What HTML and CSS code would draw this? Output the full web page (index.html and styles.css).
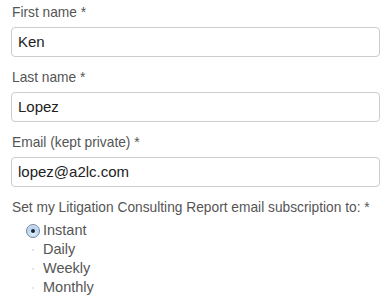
FILE: index.html
```html
<!DOCTYPE html>
<html>
<head>
<meta charset="utf-8">
<link rel="stylesheet" href="styles.css">
</head>
<body>
<form class="form">
  <div class="group">
    <label class="label">First name *</label>
    <div class="input">Ken</div>
  </div>
  <div class="group">
    <label class="label">Last name *</label>
    <div class="input">Lopez</div>
  </div>
  <div class="group">
    <label class="label">Email (kept private) *</label>
    <div class="input">lopez@a2lc.com</div>
  </div>
  <div class="group">
    <label class="label">Set my Litigation Consulting Report email subscription to: *</label>
    <ul class="options">
      <li class="option"><span class="radio checked"></span><span>Instant</span></li>
      <li class="option"><span class="radio"></span><span>Daily</span></li>
      <li class="option"><span class="radio"></span><span>Weekly</span></li>
      <li class="option"><span class="radio"></span><span>Monthly</span></li>
    </ul>
  </div>
</form>
</body>
</html>
```
FILE: styles.css
```css
html, body {
  margin: 0;
  padding: 0;
  background: #ffffff;
}
body {
  font-family: "Liberation Sans", Arial, Helvetica, sans-serif;
  width: 390px;
  height: 300px;
  overflow: hidden;
}
.form {
  padding: 5px 11px 0 11px;
  display: flex;
  flex-direction: column;
}
.group {
  display: flex;
  flex-direction: column;
  margin-bottom: 13px;
}
.label {
  display: block;
  font-size: 13.75px;
  line-height: 16px;
  color: #555555;
  padding-left: 1px;
  margin-bottom: 6px;
}
.input {
  box-sizing: border-box;
  height: 30px;
  width: 369px;
  border: 1px solid #cccccc;
  border-radius: 4px;
  padding: 0 6px;
  font-size: 15px;
  line-height: 28px;
  color: #222222;
}
.options {
  list-style: none;
  margin: -1px 0 0 0;
  padding: 0 0 0 15px;
}
.option {
  display: flex;
  align-items: center;
  height: 19px;
  font-size: 14.5px;
  line-height: 19px;
  color: #555555;
}
.radio {
  box-sizing: border-box;
  width: 14px;
  height: 14px;
  margin-right: 3px;
  display: flex;
  align-items: center;
  justify-content: center;
  position: relative;
}
.radio::after {
  content: "";
  width: 2px;
  height: 2px;
  border-radius: 1px;
  background: #dddddd;
}
.radio.checked {
  border: 1px solid #6e86a6;
  border-radius: 50%;
  background: radial-gradient(circle at 50% 70%, #e6f1fc 0%, #b4d0ee 60%, #8fb4e0 100%);
  box-shadow: inset 0 1px 1px rgba(255,255,255,0.8);
}
.radio.checked::after {
  width: 4px;
  height: 4px;
  border-radius: 50%;
  background: #1b2636;
}
```
